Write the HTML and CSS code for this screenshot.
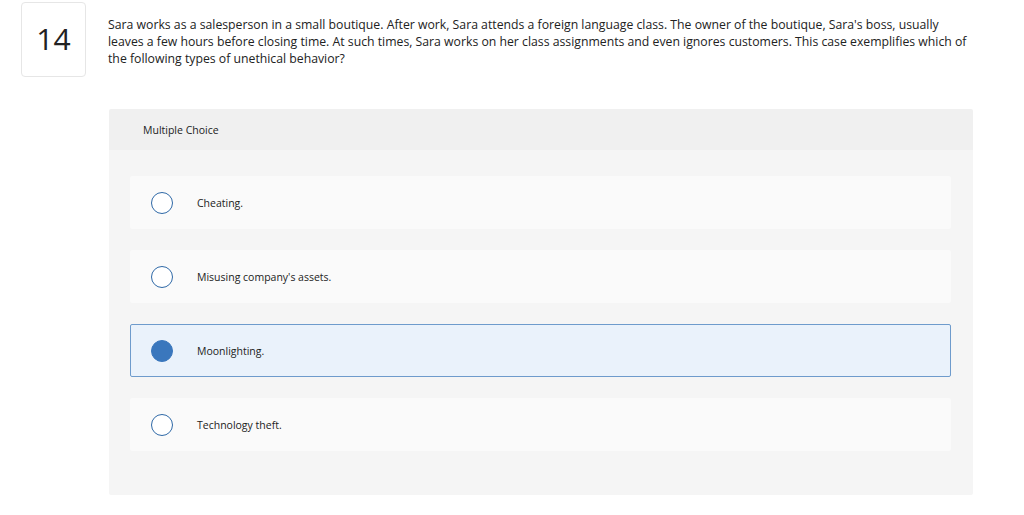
FILE: index.html
```html
<!DOCTYPE html>
<html>
<head>
<meta charset="utf-8">
<link rel="stylesheet" href="styles.css">
</head>
<body>
<div class="page">
  <div class="question">
    <div class="num">14</div>
    <div class="content">
      <p class="prompt">Sara works as a salesperson in a small boutique. After work, Sara attends a foreign language class. The owner of the boutique, Sara's boss, usually<br>leaves a few hours before closing time. At such times, Sara works on her class assignments and even ignores customers. This case exemplifies which of<br>the following types of unethical behavior?</p>
      <div class="panel">
        <div class="panel-head">Multiple Choice</div>
        <div class="panel-body">
          <div class="option"><span class="radio"></span><span class="label">Cheating.</span></div>
          <div class="option"><span class="radio"></span><span class="label">Misusing company's assets.</span></div>
          <div class="option selected"><span class="radio"></span><span class="label">Moonlighting.</span></div>
          <div class="option"><span class="radio"></span><span class="label">Technology theft.</span></div>
        </div>
      </div>
    </div>
  </div>
</div>
</body>
</html>
```
FILE: styles.css
```css
* { box-sizing: border-box; }
html, body { margin: 0; padding: 0; background: #fff; }
body { font-family: "Open Sans", "Liberation Sans", sans-serif; color: #222; }
.page { padding: 2px 0 0 21px; }
.question { display: flex; align-items: flex-start; }
.num {
  width: 65px; height: 75px; flex: none;
  border: 1px solid #e6e6e6; border-radius: 4px;
  display: flex; align-items: center; justify-content: center;
  font-size: 30px; color: #222; font-family: "Open Sans", sans-serif;
  padding-bottom: 2px;
}
.content { margin-left: 22px; width: 870px; }
.prompt {
  margin: 14px 0 0 0; font-size: 12.25px; line-height: 17px; color: #222;
  width: 900px; white-space: nowrap;
}
.panel { margin-top: 42px; margin-left: 1px; width: 864px; border-radius: 2px; overflow: hidden; }
.panel-head {
  height: 41px; background: #f0f0f0; padding-left: 34px;
  display: flex; align-items: center; font-size: 10.5px; color: #222;
}
.panel-body { background: #f5f5f5; padding: 26px 22px 44px 21px; display: flex; flex-direction: column; gap: 21px; }
.option {
  height: 53px; background: #fafafa; border-radius: 2px;
  display: flex; align-items: center; padding-left: 20px;
  border: 1px solid transparent;
}
.option.selected { background: #eaf2fb; border-color: #6e9bcc; }
.radio {
  width: 22px; height: 22px; border-radius: 50%; flex: none;
  border: 1px solid #2f69a7; background: #fff;
}
.selected .radio { background: #3a77bd; border-color: #3a77bd; }
.label { margin-left: 24px; font-size: 10.5px; color: #222; }
```
